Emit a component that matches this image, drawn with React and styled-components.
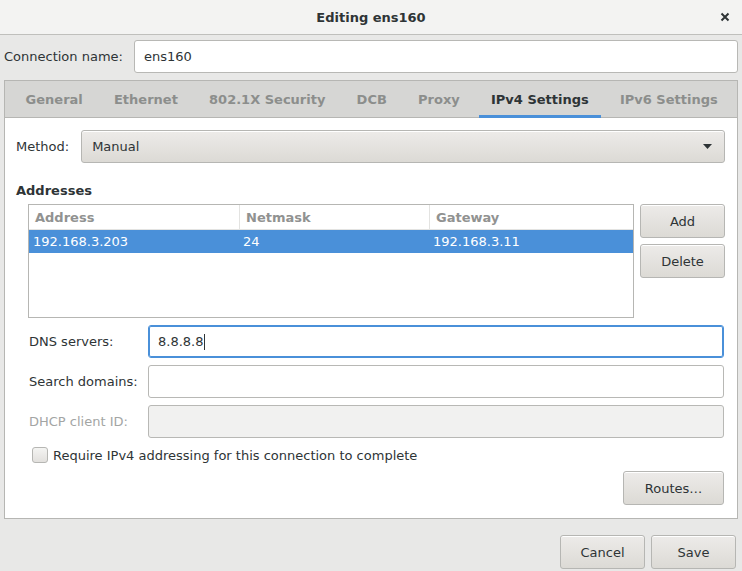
import React from 'react';
import styled, { createGlobalStyle, css } from 'styled-components';

const GlobalStyle = createGlobalStyle`
  html, body {
    margin: 0;
    padding: 0;
    background: #e8e8e7;
  }
  * {
    box-sizing: border-box;
  }
`;

const Window = styled.div`
  width: 742px;
  height: 571px;
  display: flex;
  flex-direction: column;
  background: #e8e8e7;
  font-family: 'DejaVu Sans', 'Liberation Sans', sans-serif;
  font-size: 13px;
  color: #2e3436;
  overflow: hidden;
`;

const TitleBar = styled.div`
  height: 35px;
  flex: none;
  display: flex;
  align-items: center;
  justify-content: center;
  position: relative;
  background: #f3f3f2;
  border-bottom: 1px solid #bfbfbc;
`;

const Title = styled.span`
  font-weight: bold;
  font-size: 13px;
  color: #2e3436;
`;

const CloseButton = styled.div`
  position: absolute;
  right: 12px;
  top: 12px;
  width: 10px;
  height: 10px;
  display: flex;
`;

const NameRow = styled.div`
  display: flex;
  align-items: center;
  height: 33px;
  margin: 5px 4px 0 4px;
  gap: 11px;
`;

const Label = styled.span`
  color: ${(p) => (p.$disabled ? '#a3a5a4' : '#2e3436')};
  white-space: nowrap;
`;

const TextInput = styled.div`
  flex: 1;
  height: 33px;
  display: flex;
  align-items: center;
  padding: 0 9px;
  border-radius: 3px;
  border: 1px solid ${(p) => (p.$focused ? '#4a90d9' : '#b8b8b5')};
  background: ${(p) => (p.$disabled ? '#f1f1f0' : '#ffffff')};
  ${(p) =>
    p.$focused &&
    css`
      box-shadow: inset 0 0 0 1px #4a90d9;
    `}
`;

const Caret = styled.span`
  display: inline-block;
  width: 1px;
  height: 16px;
  background: #2e3436;
  margin-left: 1px;
`;

const Notebook = styled.div`
  margin: 7px 4px 0 4px;
  height: 439px;
  display: flex;
  flex-direction: column;
  border: 1px solid #b6b6b3;
  background: #ffffff;
`;

const TabStrip = styled.div`
  height: 37px;
  flex: none;
  display: flex;
  padding: 0 4px 0 5px;
  background: #d6d6d4;
  border-bottom: 1px solid #b6b6b3;
`;

const Tab = styled.div`
  display: flex;
  align-items: center;
  white-space: nowrap;
  flex: none;
  padding: 3px 12px 1px 12px;
  margin: 0 3.6px -1px 3.6px;
  font-weight: bold;
  color: ${(p) => (p.$active ? '#2e3436' : '#8c8e8c')};
  border-bottom: 3px solid ${(p) => (p.$active ? '#4a90d9' : 'transparent')};
`;

const Page = styled.div`
  flex: 1;
  display: flex;
  flex-direction: column;
  padding: 12px 12px 12px 11px;
`;

const MethodRow = styled.div`
  display: flex;
  align-items: center;
  gap: 12px;
`;

const Combo = styled.div`
  flex: 1;
  height: 33px;
  display: flex;
  align-items: center;
  justify-content: space-between;
  padding: 0 12px 0 10px;
  border: 1px solid #b6b6b3;
  border-radius: 3px;
  background: linear-gradient(#edebe9, #dcdad5);
  box-shadow: inset 0 1px #ffffff;
`;

const Section = styled.div`
  font-weight: bold;
  margin-top: 20px;
  line-height: 16px;
`;

const AddressArea = styled.div`
  display: flex;
  gap: 6px;
  margin: 5px 0 0 12px;
`;

const Table = styled.div`
  flex: 1;
  height: 114px;
  border: 1px solid #b6b6b3;
  background: #ffffff;
`;

const TableRow = styled.div`
  display: grid;
  grid-template-columns: 210px 190px 1fr;
  height: ${(p) => (p.$header ? '25px' : '23px')};
  align-items: center;
  background: ${(p) => (p.$selected ? '#4a90d9' : 'transparent')};
  color: ${(p) => (p.$selected ? '#ffffff' : '#2e3436')};
  border-bottom: ${(p) => (p.$header ? '1px solid #e3e3e1' : 'none')};
`;

const Cell = styled.div`
  height: 100%;
  display: flex;
  align-items: center;
  padding-left: ${(p) => (p.$header ? '6px' : '4px')};
  font-weight: ${(p) => (p.$header ? 'bold' : 'normal')};
  color: ${(p) => (p.$header ? '#919291' : 'inherit')};
  border-left: ${(p) => (p.$header && !p.$first ? '1px solid #e3e3e1' : 'none')};
`;

const ButtonColumn = styled.div`
  width: 85px;
  display: flex;
  flex-direction: column;
  gap: 6px;
`;

const Button = styled.div`
  width: ${(p) => p.$width || 85}px;
  height: 34px;
  display: flex;
  align-items: center;
  justify-content: center;
  border: 1px solid #b6b6b3;
  border-radius: 3px;
  background: linear-gradient(#edebe9, #dcdad5);
  box-shadow: inset 0 1px #ffffff;
  color: #2e3436;
`;

const FormGrid = styled.div`
  display: grid;
  grid-template-columns: 119px 1fr;
  row-gap: 7px;
  align-items: center;
  margin: 7px 1px 0 13px;
`;

const CheckRow = styled.div`
  display: flex;
  align-items: center;
  gap: 5px;
  margin: 9px 0 0 16px;
`;

const CheckBox = styled.div`
  width: 16px;
  height: 16px;
  border: 1px solid #b6b6b3;
  border-radius: 3px;
  background: linear-gradient(#f4f4f2, #e2e0dd);
`;

const RoutesRow = styled.div`
  display: flex;
  justify-content: flex-end;
  margin: 8px 1px 0 0;
`;

const Footer = styled.div`
  display: flex;
  justify-content: flex-end;
  gap: 6px;
  margin: 16px 6px 0 0;
`;

const CloseIcon = () => (
  <svg width="10" height="10" viewBox="0 0 10 10">
    <path d="M1.5 1.5 L8.5 8.5 M8.5 1.5 L1.5 8.5" stroke="#2e3436" strokeWidth="2" />
  </svg>
);

const DownArrow = () => (
  <svg width="9" height="5" viewBox="0 0 9 5">
    <path d="M0 0 H9 L4.5 5 Z" fill="#2e3436" />
  </svg>
);

const tabs = ['General', 'Ethernet', '802.1X Security', 'DCB', 'Proxy', 'IPv4 Settings', 'IPv6 Settings'];

const addresses = [{ address: '192.168.3.203', netmask: '24', gateway: '192.168.3.11' }];

const App = () => {
  return (
    <Window>
      <GlobalStyle />
      <TitleBar>
        <Title>Editing ens160</Title>
        <CloseButton>
          <CloseIcon />
        </CloseButton>
      </TitleBar>

      <NameRow>
        <Label>Connection name:</Label>
        <TextInput>ens160</TextInput>
      </NameRow>

      <Notebook>
        <TabStrip>
          {tabs.map((t) => (
            <Tab key={t} $active={t === 'IPv4 Settings'}>
              {t}
            </Tab>
          ))}
        </TabStrip>
        <Page>
          <MethodRow>
            <Label>Method:</Label>
            <Combo>
              <span>Manual</span>
              <DownArrow />
            </Combo>
          </MethodRow>

          <Section>Addresses</Section>
          <AddressArea>
            <Table>
              <TableRow $header>
                <Cell $header $first>Address</Cell>
                <Cell $header>Netmask</Cell>
                <Cell $header>Gateway</Cell>
              </TableRow>
              {addresses.map((a) => (
                <TableRow key={a.address} $selected>
                  <Cell>{a.address}</Cell>
                  <Cell>{a.netmask}</Cell>
                  <Cell>{a.gateway}</Cell>
                </TableRow>
              ))}
            </Table>
            <ButtonColumn>
              <Button>Add</Button>
              <Button>Delete</Button>
            </ButtonColumn>
          </AddressArea>

          <FormGrid>
            <Label>DNS servers:</Label>
            <TextInput $focused>
              8.8.8.8
              <Caret />
            </TextInput>
            <Label>Search domains:</Label>
            <TextInput />
            <Label $disabled>DHCP client ID:</Label>
            <TextInput $disabled />
          </FormGrid>

          <CheckRow>
            <CheckBox />
            <Label>Require IPv4 addressing for this connection to complete</Label>
          </CheckRow>

          <RoutesRow>
            <Button $width={101}>Routes…</Button>
          </RoutesRow>
        </Page>
      </Notebook>

      <Footer>
        <Button>Cancel</Button>
        <Button>Save</Button>
      </Footer>
    </Window>
  );
};

export default App;
